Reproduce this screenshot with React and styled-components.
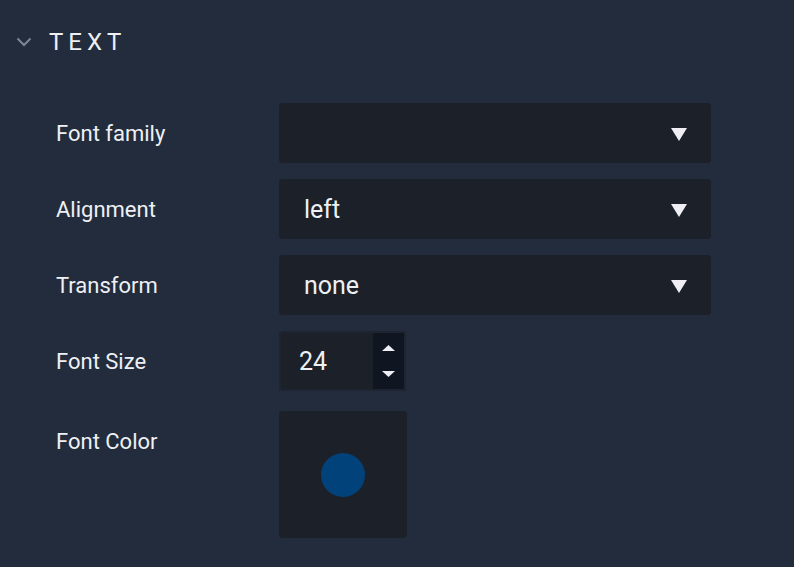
import React from "react";
import styled, { createGlobalStyle } from "styled-components";

const Global = createGlobalStyle`
  html, body { margin: 0; padding: 0; background: #222c3c; }
  body { font-family: Roboto, "Liberation Sans", sans-serif; color: #eef0f4; }
`;

const Panel = styled.div`
  width: 794px;
  height: 567px;
  background: #222c3c;
  box-sizing: border-box;
  overflow: hidden;
`;

const Header = styled.div`
  display: flex;
  align-items: center;
  height: 84px;
  padding-left: 16px;
  gap: 17px;
`;

const Title = styled.div`
  font-size: 24px;
  letter-spacing: 5px;
  color: #eef0f4;
  line-height: 1;
  padding-top: 0px;
`;

const Rows = styled.div`
  display: flex;
  flex-direction: column;
  padding: 19px 0 0 56px;
`;

const Row = styled.div`
  display: flex;
  align-items: flex-start;
  margin-bottom: ${(p) => p.$gap || 16}px;
`;

const Label = styled.div`
  width: 223px;
  height: 60px;
  line-height: 61px;
  font-size: 22px;
  color: #eef0f4;
`;

const Select = styled.div`
  width: 432px;
  height: 60px;
  background: #1b2029;
  border-radius: 4px;
  display: flex;
  align-items: center;
  justify-content: space-between;
  padding: 0 24px 0 25px;
  box-sizing: border-box;
  font-size: 25px;
  color: #eef0f4;
`;

const Arrow = styled.svg`
  width: 16px;
  height: 13px;
  margin-top: 2px;
`;

const NumberBox = styled.div`
  width: 127px;
  height: 60px;
  box-sizing: border-box;
  border: 2px solid #1e2531;
  display: flex;
  background: #1b2029;
`;

const NumberValue = styled.div`
  flex: 1;
  display: flex;
  align-items: center;
  padding-left: 18px;
  font-size: 25px;
  color: #eef0f4;
`;

const Spinner = styled.div`
  width: 31px;
  background: #101621;
  display: flex;
  flex-direction: column;
  align-items: center;
  justify-content: center;
  gap: 20px;
`;

const ColorBox = styled.div`
  width: 128px;
  height: 127px;
  background: #1b2029;
  border-radius: 4px;
  display: flex;
  align-items: center;
  justify-content: center;
`;

const Dot = styled.div`
  width: 44px;
  height: 44px;
  border-radius: 50%;
  background: #02427a;
`;

const Tri = () => (
  <Arrow viewBox="0 0 16 13">
    <path d="M0 0 H16 L8 13 Z" fill="#eeeef4" />
  </Arrow>
);

const SelectRow = ({ label, value }) => (
  <Row>
    <Label>{label}</Label>
    <Select>
      <span>{value}</span>
      <Tri />
    </Select>
  </Row>
);

export default function App() {
  return (
    <Panel>
      <Global />
      <Header>
        <svg width="16" height="10" viewBox="0 0 16 10">
          <path d="M1.5 1.5 L8 8 L14.5 1.5" fill="none" stroke="#7e8592" strokeWidth="2" />
        </svg>
        <Title>TEXT</Title>
      </Header>
      <Rows>
        <SelectRow label="Font family" value="" />
        <SelectRow label="Alignment" value="left" />
        <SelectRow label="Transform" value="none" />
        <Row $gap={20}>
          <Label>Font Size</Label>
          <NumberBox>
            <NumberValue>24</NumberValue>
            <Spinner>
              <svg width="13" height="6" viewBox="0 0 13 6"><path d="M0 6 L6.5 0 L13 6 Z" fill="#eeeef4" /></svg>
              <svg width="13" height="6" viewBox="0 0 13 6"><path d="M0 0 L13 0 L6.5 6 Z" fill="#eeeef4" /></svg>
            </Spinner>
          </NumberBox>
        </Row>
        <Row>
          <Label>Font Color</Label>
          <ColorBox>
            <Dot />
          </ColorBox>
        </Row>
      </Rows>
    </Panel>
  );
}
